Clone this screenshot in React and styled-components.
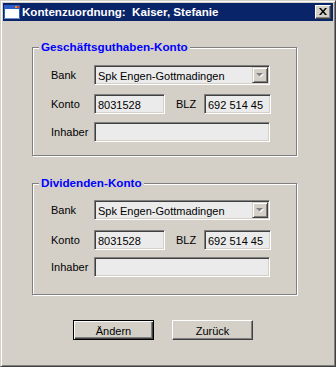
import React from 'react';
import styled, { createGlobalStyle } from 'styled-components';

const Global = createGlobalStyle`
  html, body { margin: 0; padding: 0; background: #d4d0c8; }
  body { font-family: "Liberation Sans", Arial, sans-serif; font-size: 11px; color: #000; }
  * { box-sizing: border-box; }
`;

const Window = styled.div`
  width: 336px;
  height: 367px;
  background: #d4d0c8;
  border: 1px solid;
  border-color: #d4d0c8 #404040 #404040 #d4d0c8;
  box-shadow: inset 1px 1px #fff, inset -1px -1px #808080;
  padding: 2px;
  display: flex;
  flex-direction: column;
`;

const TitleBar = styled.div`
  height: 18px;
  background: #0a246a;
  display: flex;
  align-items: center;
  padding: 0 2px 0 1px;
`;

const TitleText = styled.span`
  flex: 1;
  margin-left: 2px;
  color: #fff;
  font-weight: bold;
  font-size: 11.6px;
  white-space: pre;
  line-height: 18px;
`;

const CloseButton = styled.div`
  width: 16px;
  height: 14px;
  background: #d4d0c8;
  border: 1px solid;
  border-color: #fff #404040 #404040 #fff;
  box-shadow: inset -1px -1px #808080;
  display: flex;
  align-items: center;
  justify-content: center;
  padding: 0 1px 1px 0;
`;

const Client = styled.div`
  flex: 1;
  display: flex;
  flex-direction: column;
  padding: 26px 0 0 29px;
`;

const GroupBox = styled.div`
  position: relative;
  width: 265px;
  border: 1px solid #808080;
  box-shadow: inset 1px 1px #fff, 1px 1px #fff;
  padding: ${p => p.$pt}px 0 ${p => p.$pb}px 18px;
  margin-top: ${p => p.$mt || 0}px;
`;

const GroupTitle = styled.span`
  position: absolute;
  left: 6px;
  top: -8px;
  padding: 0 2px;
  background: #d4d0c8;
  color: #0000ff;
  font-weight: bold;
  font-size: 11.7px;
  line-height: 14px;
  white-space: nowrap;
`;

const Row = styled.div`
  display: flex;
  align-items: center;
  height: 20px;
  margin-top: ${p => p.$mt || 0}px;
`;

const Label = styled.span`
  width: ${p => p.$w}px;
  margin-left: ${p => p.$ml || 0}px;
  margin-top: ${p => p.$dy || 0}px;
  white-space: nowrap;
`;

const Field = styled.div`
  position: relative;
  width: ${p => p.$w}px;
  height: 20px;
  background: #ebebeb;
  border: 1px solid;
  border-color: #808080 #fff #fff #808080;
  box-shadow: inset 1px 1px #404040, inset -1px -1px #d4d0c8;
  padding: 1px 0 0 3px;
  display: flex;
  align-items: center;
  white-space: nowrap;
  overflow: hidden;
`;

const DropButton = styled.div`
  position: absolute;
  right: 1px;
  top: 1px;
  width: 16px;
  height: 16px;
  background: #d4d0c8;
  border: 1px solid;
  border-color: #d4d0c8 #404040 #404040 #d4d0c8;
  box-shadow: inset 1px 1px #fff, inset -1px -1px #808080;
  display: flex;
  align-items: center;
  justify-content: center;
`;

const ButtonRow = styled.div`
  display: flex;
  gap: 18px;
  margin: 25px 0 0 41px;
`;

const Button = styled.div`
  width: 81px;
  height: 20px;
  background: #d4d0c8;
  border: 1px solid;
  border-color: ${p => (p.$default ? '#000' : '#fff #404040 #404040 #fff')};
  box-shadow: ${p =>
    p.$default
      ? 'inset 1px 1px #fff, inset -1px -1px #404040, inset -2px -2px #808080'
      : 'inset -1px -1px #808080'};
  display: flex;
  align-items: center;
  justify-content: center;
  padding-top: 1px;
`;

const WinIcon = () => (
  <svg width="16" height="14" viewBox="0 0 16 14">
    <rect x="0" y="0" width="16" height="14" fill="#2b5fc7" />
    <rect x="1" y="4" width="14" height="9" fill="#fff" />
    <rect x="0" y="13" width="16" height="1" fill="#6f8fd0" />
    <rect x="11" y="1" width="2" height="2" fill="#f08a2a" />
    <rect x="13" y="1" width="2" height="2" fill="#e04020" />
  </svg>
);

const CloseGlyph = () => (
  <svg width="8" height="7" viewBox="0 0 8 7">
    <path d="M0 0h2l2 2.4 2-2.4h2l-3 3.5 3 3.5h-2l-2-2.4-2 2.4h-2l3-3.5z" fill="#000" />
  </svg>
);

const Arrow = () => (
  <svg width="8" height="5" viewBox="0 0 8 5">
    <path d="M1 1h7l-3.5 3.5z" fill="#fff" />
    <path d="M0 0h7l-3.5 3.5z" fill="#808080" />
  </svg>
);

const AccountGroup = ({ title, pt, pb, mt, gaps }) => (
  <GroupBox $pt={pt} $pb={pb} $mt={mt}>
    <GroupTitle>{title}</GroupTitle>
    <Row>
      <Label $w={43}>Bank</Label>
      <Field $w={176}>
        Spk Engen-Gottmadingen
        <DropButton>
          <Arrow />
        </DropButton>
      </Field>
    </Row>
    <Row $mt={gaps[0]}>
      <Label $w={43}>Konto</Label>
      <Field $w={71}>8031528</Field>
      <Label $w={28} $ml={11}>BLZ</Label>
      <Field $w={67}>692 514 45</Field>
    </Row>
    <Row $mt={gaps[1]}>
      <Label $w={43}>Inhaber</Label>
      <Field $w={176} />
    </Row>
  </GroupBox>
);

export default function App() {
  return (
    <>
      <Global />
      <Window>
        <TitleBar>
          <WinIcon />
          <TitleText>{'Kontenzuordnung:  Kaiser, Stefanie'}</TitleText>
          <CloseButton>
            <CloseGlyph />
          </CloseButton>
        </TitleBar>
        <Client>
          <AccountGroup title="Geschäftsguthaben-Konto" pt={17} pb={13} gaps={[9, 8]} />
          <AccountGroup title="Dividenden-Konto" pt={16} pb={17} mt={27} gaps={[10, 7]} />
          <ButtonRow>
            <Button $default>Ändern</Button>
            <Button>Zurück</Button>
          </ButtonRow>
        </Client>
      </Window>
    </>
  );
}
